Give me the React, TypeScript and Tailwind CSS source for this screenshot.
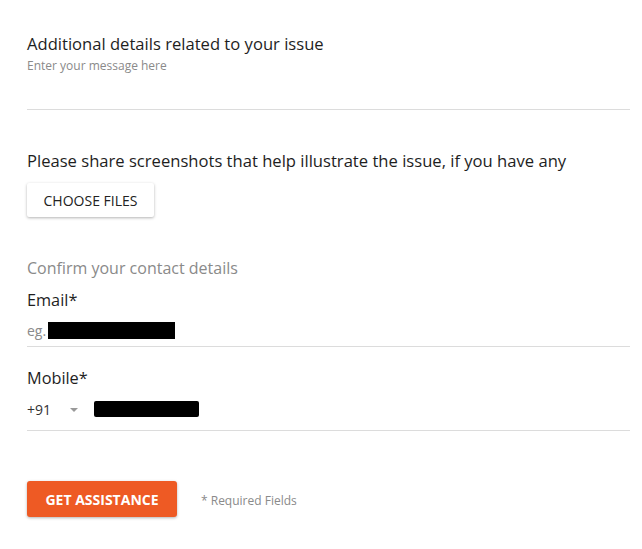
import React from "react";

export default function App() {
  return (
    <div className="w-[642px] h-[549px] bg-white overflow-hidden" style={{ fontFamily: '"Open Sans", sans-serif' }}>
      <div className="pl-[27px] pr-[12px] pt-[33px]">
        <div className="text-[16.6px] leading-[22px] text-[#1e1e1e]">Additional details related to your issue</div>
        <div className="text-[12px] leading-[16px] text-[#8a8a8a] mt-[3px]">Enter your message here</div>
        <div className="h-[35px]" />
        <div className="border-b border-[#dcdcdc]" />

        <div className="text-[16.6px] leading-[22px] text-[#1e1e1e] mt-[40px]">
          Please share screenshots that help illustrate the issue, if you have any
        </div>
        <button className="mt-[11px] w-[127px] h-[34px] bg-white rounded-[2px] shadow-[0_1px_3px_rgba(0,0,0,0.3)] text-[14px] font-medium text-[#222] uppercase">
          Choose Files
        </button>

        <div className="text-[16px] leading-[20px] text-[#8a8a8a] mt-[41px]">Confirm your contact details</div>
        <div className="text-[16.3px] leading-[22px] text-[#1e1e1e] font-medium mt-[11px]">Email*</div>
        <div className="flex items-center h-[20px] mt-[9px]">
          <span className="text-[14px] text-[#8a8a8a]">eg.</span>
          <span className="ml-[2px] inline-block w-[127px] h-[17px] bg-black" />
        </div>
        <div className="border-b border-[#dcdcdc] mt-[6px]" />

        <div className="text-[16.3px] leading-[22px] text-[#1e1e1e] font-medium mt-[20px]">Mobile*</div>
        <div className="flex items-center h-[20px] mt-[10px]">
          <span className="text-[14px] text-[#333] w-[42px]">+91</span>
          <svg width="10" height="6" viewBox="0 0 10 6" className="mt-[1px]">
            <path d="M1 1 L5 5 L9 1 Z" fill="#999" />
          </svg>
          <span className="ml-[15px] inline-block w-[105px] h-[16px] bg-black rounded-[2px]" />
        </div>
        <div className="border-b border-[#dcdcdc] mt-[11px]" />

        <div className="flex items-center mt-[50px]">
          <button className="w-[150px] h-[36px] bg-[#ee5a24] rounded-[3px] shadow-[0_1px_3px_rgba(0,0,0,0.3)] text-white text-[14px] font-bold uppercase">
            Get Assistance
          </button>
          <span className="ml-[24px] mt-[3px] text-[12px] text-[#8a8a8a]">* Required Fields</span>
        </div>
      </div>
    </div>
  );
}
